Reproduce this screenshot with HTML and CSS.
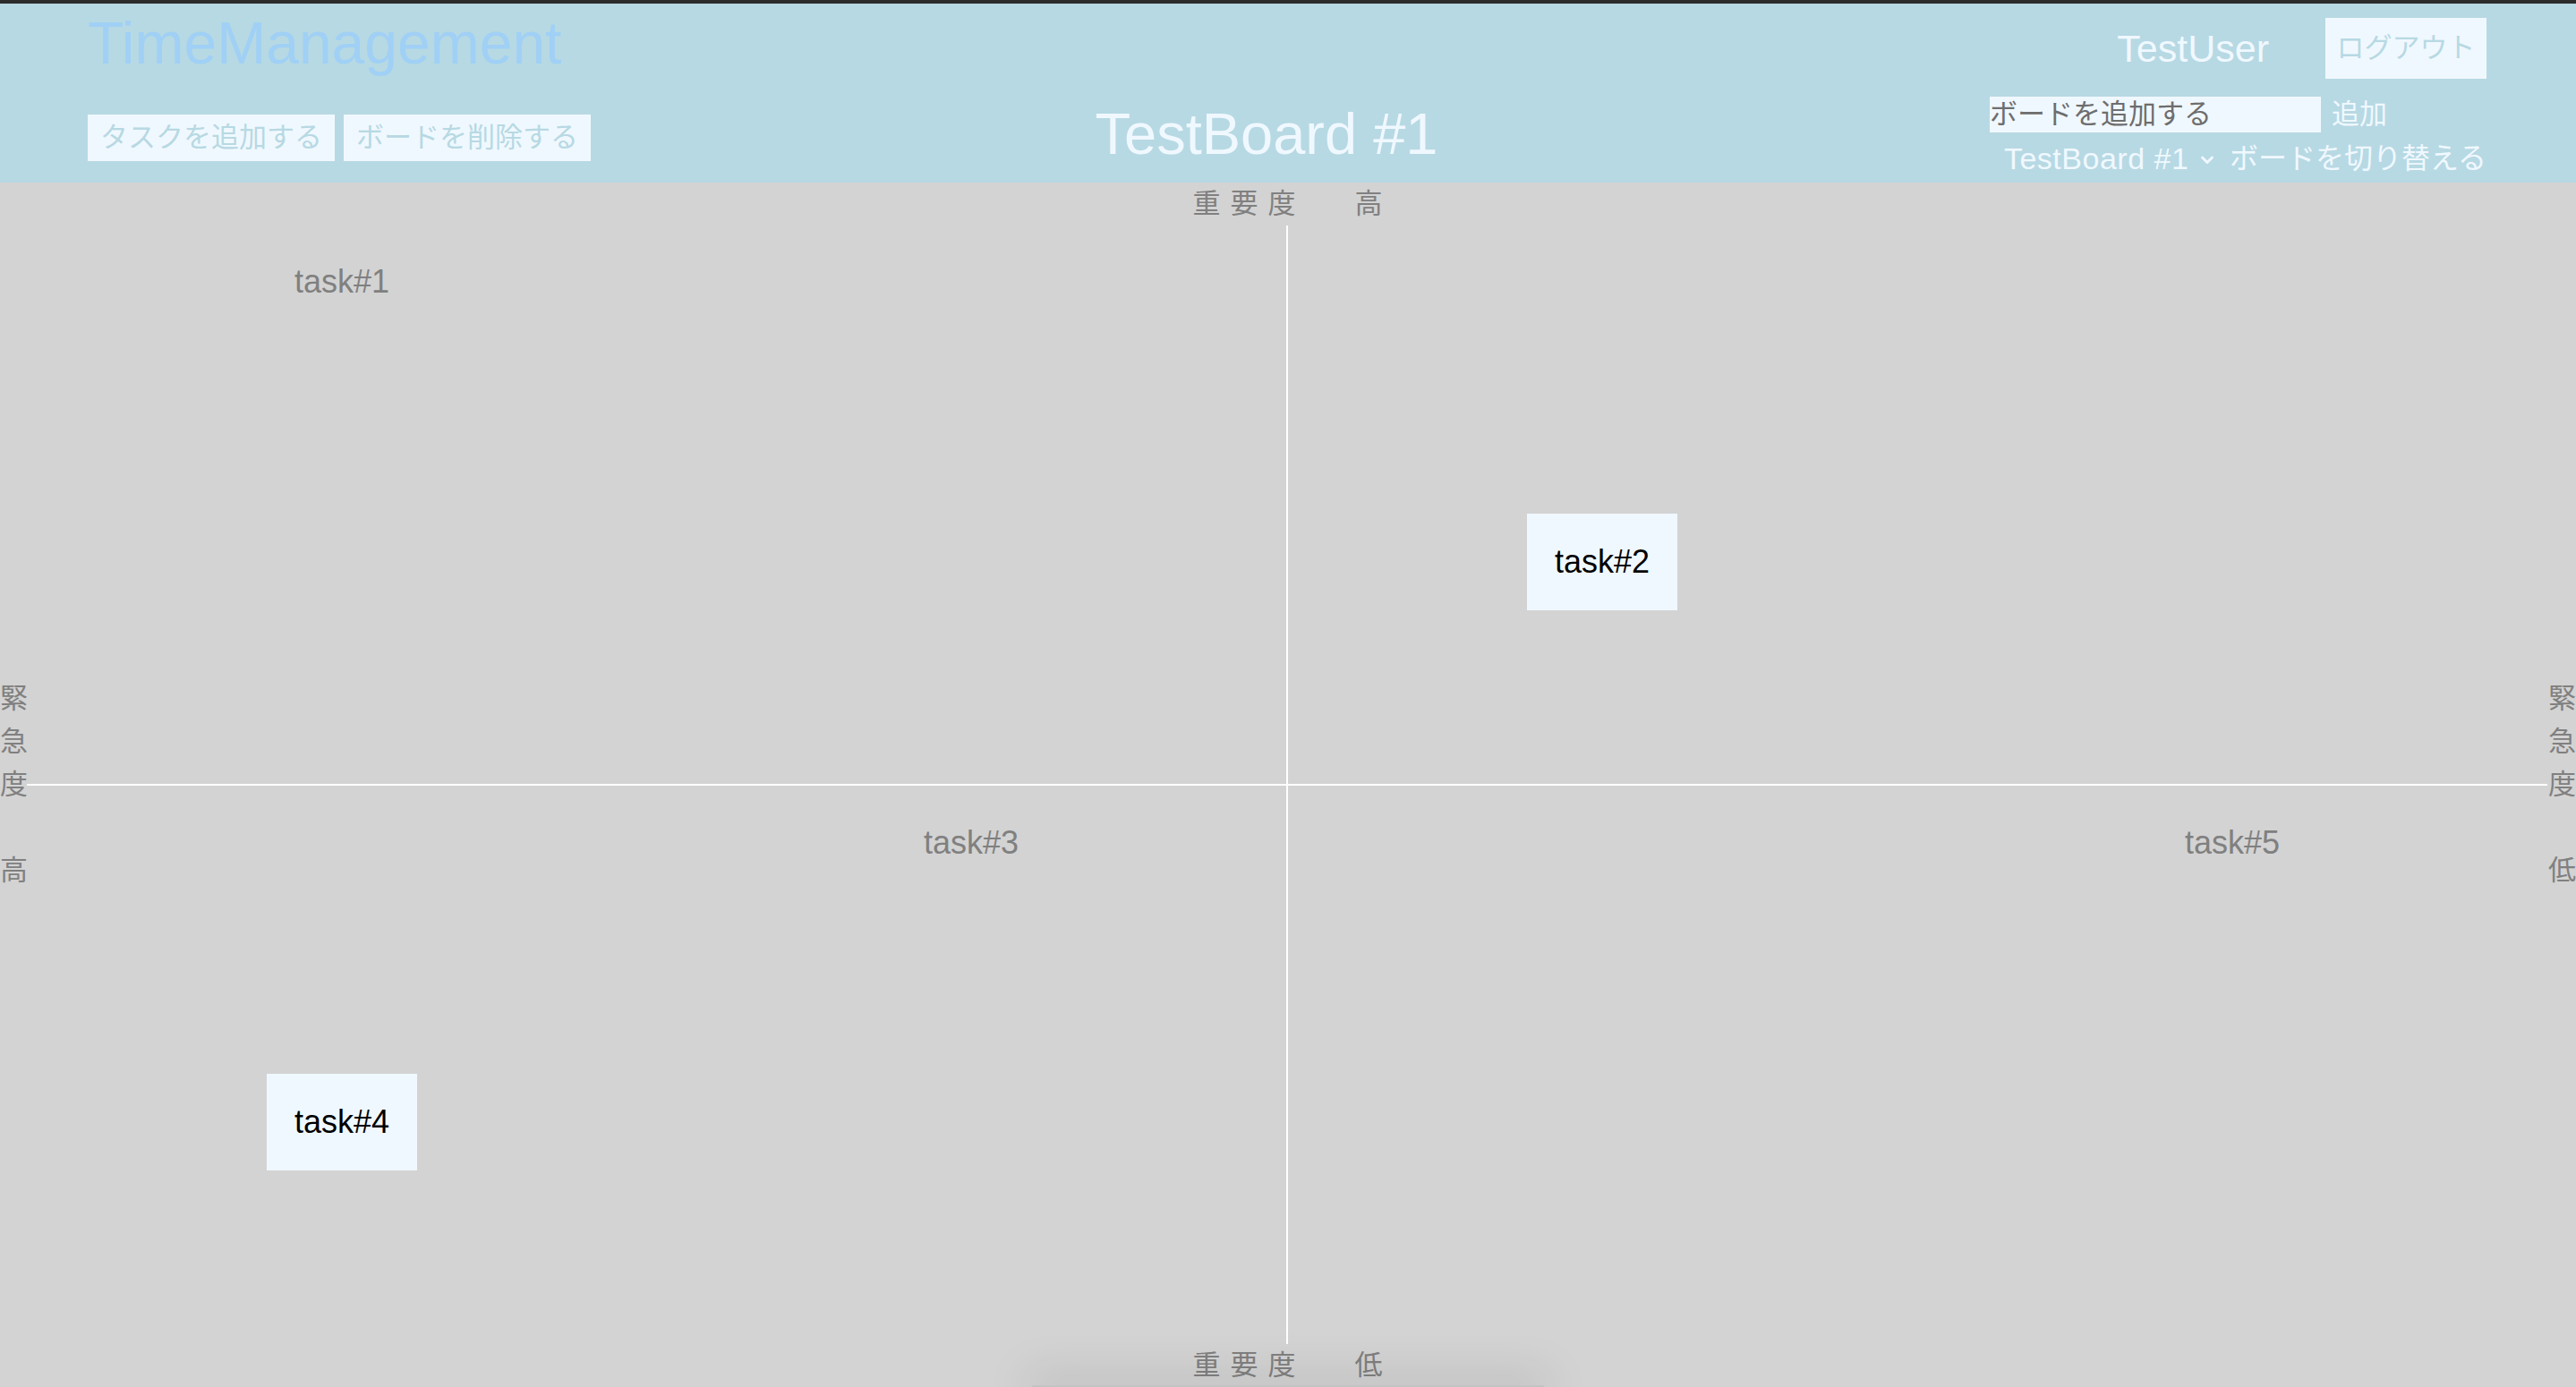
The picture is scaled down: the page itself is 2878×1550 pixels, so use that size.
FILE: index.html
```html
<!DOCTYPE html>
<html lang="ja">
<head>
<meta charset="utf-8">
<title>TimeManagement</title>
<link rel="stylesheet" href="styles.css">
</head>
<body>
<div class="topbar"></div>
<header class="header">
  <div class="header-left">
    <h1 class="brand">TimeManagement</h1>
    <div class="actions">
      <button class="btn">タスクを追加する</button>
      <button class="btn">ボードを削除する</button>
    </div>
  </div>
  <h2 class="board-title">TestBoard #1</h2>
  <div class="header-right">
    <div class="user-row">
      <span class="username">TestUser</span>
      <button class="btn btn-logout">ログアウト</button>
    </div>
    <form class="add-row">
      <input class="board-input" type="text" placeholder="ボードを追加する">
      <button class="link-btn add-btn" type="button">追加</button>
    </form>
    <div class="switch-row">
      <select class="board-select"><option>TestBoard #1</option></select>
      <svg class="chevron" width="16" height="12" viewBox="0 0 16 12"><polyline points="2.5,3 8,8.5 13.5,3" fill="none" stroke="#f0f8ff" stroke-width="3" stroke-linecap="round" stroke-linejoin="round"/></svg>
      <button class="link-btn switch-btn" type="button">ボードを切り替える</button>
    </div>
  </div>
</header>
<main class="matrix">
  <div class="side-label side-left">
    <span>緊</span><span>急</span><span>度</span><span>&nbsp;</span><span>高</span>
  </div>
  <div class="matrix-center">
    <div class="axis-label"><span class="axis-name">重要度</span><span class="axis-value">高</span></div>
    <div class="plane">
      <div class="task task-plain" style="left:9.517%;top:0.72%">task#1</div>
      <div class="task task-card" style="left:59.517%;top:25.76%">task#2</div>
      <div class="task task-plain" style="left:34.48%;top:50.88%">task#3</div>
      <div class="task task-card" style="left:9.517%;top:75.84%">task#4</div>
      <div class="task task-plain" style="left:84.52%;top:50.88%">task#5</div>
    </div>
    <div class="axis-label"><span class="axis-name">重要度</span><span class="axis-value">低</span></div>
  </div>
  <div class="side-label side-right">
    <span>緊</span><span>急</span><span>度</span><span>&nbsp;</span><span>低</span>
  </div>
</main>
<div class="drawer"></div>
</body>
</html>
```

FILE: styles.css
```css
* {
  box-sizing: border-box;
}

html, body {
  margin: 0;
  padding: 0;
  height: 100%;
  overflow: hidden;
}

body {
  font-family: "Liberation Sans", "Noto Sans CJK JP", sans-serif;
  background: #d3d3d3;
  position: relative;
}

button, input, select {
  font: inherit;
}

.topbar {
  height: 4px;
  background: #2c2c2c;
}

.header {
  height: 200px;
  background: #b7d9e3;
  display: flex;
  justify-content: space-between;
  align-items: flex-start;
  padding: 0 100px 0 98px;
}

.header-left {
  display: flex;
  flex-direction: column;
  padding-top: 7px;
}

.brand {
  margin: 0;
  font-size: 66px;
  font-weight: normal;
  line-height: 74px;
  color: #a0d0f5;
}

.actions {
  display: flex;
  gap: 10px;
  margin-top: 43px;
}

.btn {
  height: 52px;
  padding: 0 14px;
  border: 0;
  background: #f0f8ff;
  color: #b7d9e3;
  font-size: 31px;
  line-height: 52px;
  cursor: pointer;
}

.board-title {
  margin: 110px 0 0;
  font-size: 65px;
  font-weight: normal;
  line-height: 72px;
  color: #f0f8ff;
}

.header-right {
  width: 608px;
  display: flex;
  flex-direction: column;
  align-items: flex-end;
  padding-top: 16px;
}

.user-row {
  display: flex;
  align-items: center;
  height: 68px;
}

.username {
  font-size: 43px;
  color: #f0f8ff;
  margin-right: 63px;
}

.btn-logout {
  height: 68px;
  line-height: 68px;
  padding: 0 12.5px;
}

.add-row {
  margin: 20px 105px 0 0;
  display: flex;
  align-items: center;
  height: 40px;
}

.board-input {
  width: 370px;
  height: 40px;
  border: 0;
  padding: 0;
  background: #f0f8ff;
  font-size: 31px;
  color: #6e6e6e;
  outline: none;
}

.board-input::placeholder {
  color: #6e6e6e;
  opacity: 1;
}

.link-btn {
  border: 0;
  background: transparent;
  color: #f0f8ff;
  font-size: 31px;
  padding: 0;
  cursor: pointer;
}

.add-btn {
  margin-left: 6px;
  padding: 0 6px;
  line-height: 40px;
}

.switch-row {
  margin: 11px 0 0 0;
  display: flex;
  align-items: center;
  height: 36px;
}

.board-select {
  appearance: none;
  -webkit-appearance: none;
  border: 0;
  padding: 0;
  background: transparent;
  color: #f0f8ff;
  font-size: 34px;
  letter-spacing: 0.5px;
  line-height: 36px;
  outline: none;
}

.chevron {
  margin-left: 12px;
  margin-top: 4px;
  display: block;
}

.switch-btn {
  margin-left: 17px;
  font-size: 32px;
  line-height: 36px;
}

.matrix {
  height: 1346px;
  display: flex;
}

.side-label {
  display: flex;
  flex-direction: column;
  justify-content: center;
  color: #808080;
  font-size: 31px;
  line-height: 48px;
}

.side-label span {
  display: block;
  height: 48px;
}

.side-left {
  width: 30px;
}

.side-right {
  width: 32px;
  padding-left: 1px;
}

.matrix-center {
  flex: 1;
  display: flex;
  flex-direction: column;
}

.axis-label {
  height: 48px;
  line-height: 48px;
  display: flex;
  justify-content: center;
  color: #808080;
  font-size: 31px;
  letter-spacing: 11px;
  padding-left: 12px;
}

.axis-value {
  margin-left: 55px;
}

.plane {
  flex: 1;
  position: relative;
}

.plane::before {
  content: "";
  position: absolute;
  left: calc(50% - 1px);
  top: 0;
  bottom: 0;
  width: 2px;
  background: #ffffff;
}

.plane::after {
  content: "";
  position: absolute;
  left: 0;
  right: 0;
  top: calc(50% - 1px);
  height: 2px;
  background: #ffffff;
}

.task {
  position: absolute;
  z-index: 1;
  width: 168px;
  height: 108px;
  padding: 30px 0;
  text-align: center;
  font-size: 36px;
  line-height: 48px;
}

.task-card {
  background: #f0f8ff;
  color: #000000;
}

.task-plain {
  color: #808080;
}

.drawer {
  position: absolute;
  left: 1153px;
  bottom: 0;
  width: 572px;
  height: 2px;
  background: #c4c4c4;
  box-shadow: 0 0 50px 6px rgba(0, 0, 0, 0.22);
}
```
